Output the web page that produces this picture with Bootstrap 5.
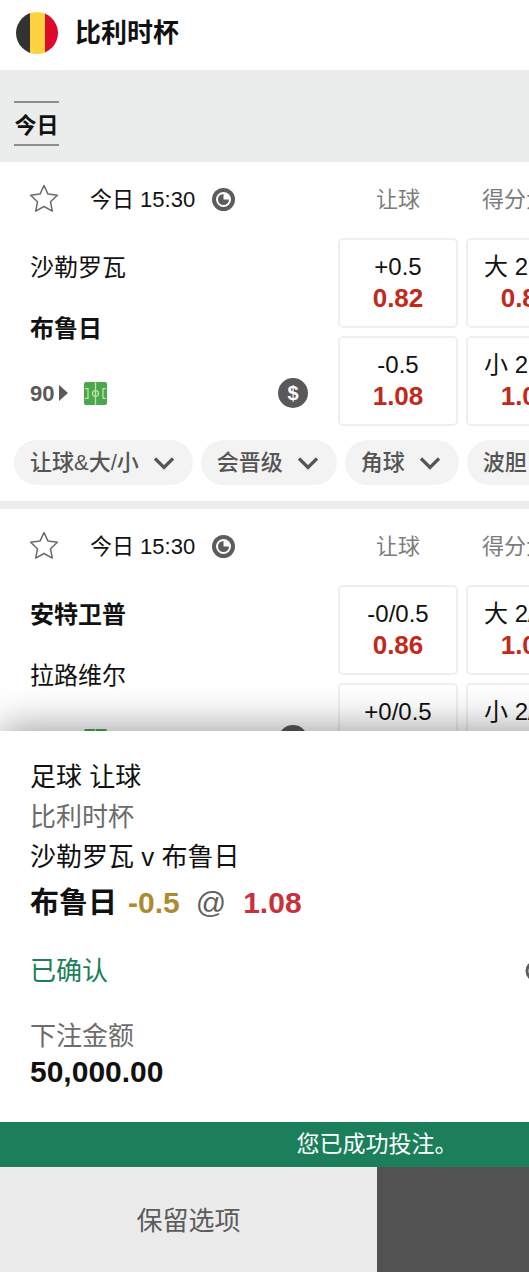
<!DOCTYPE html>
<html lang="zh-CN">
<head>
    <meta charset="UTF-8">
    <meta name="viewport" content="width=device-width, initial-scale=1.0">
    <title>比利时杯</title>
    <link rel="stylesheet" href="https://cdn.jsdelivr.net/npm/bootstrap@5.3.0/dist/css/bootstrap.min.css">
    <style>
        html, body { height: 100%; overflow: hidden; }
        body { font-family: "Liberation Sans", "Noto Sans CJK SC", sans-serif; color: #111; background: #fff; }
        .screen { width: 529px; height: 1280px; overflow: hidden; }
        svg { flex: none; }

        .top-bar { height: 70px; padding: 0 0 4px 16px; gap: 17px; }
        .top-title { font-size: 26px; font-weight: 700; line-height: 1; }
        .day-strip { height: 92px; background: #ebecec; padding: 31px 14px 0; }
        .day-tab { width: 45px; height: 45px; border-top: 2px solid #8e8e8e; border-bottom: 2px solid #8e8e8e; font-size: 22px; font-weight: 700; line-height: 45px; }

        .match-box { border-bottom: 8px solid #ececec; height: 347px; padding-bottom: 8px; }
        .match-box.last-box { border-bottom: 0; }
        .match-head { height: 76px; padding: 0 0 2px 28px; width: 800px; }
        .time-text { font-size: 22px; margin-left: 30px; width: 107px; flex: none; white-space: nowrap; }
        .clock-ico { margin-left: 15px; }
        .head-label { width: 120px; flex: none; text-align: center; font-size: 22px; color: #7c7c7c; white-space: nowrap; }
        .label-gap { margin-left: 8px; }
        .head-spacer { width: 103px; flex: none; }
        .match-body { height: 188px; width: 800px; }
        .team-col { width: 338px; flex: none; padding-left: 30px; }
        .team-line { height: 61px; font-size: 24px; line-height: 60px; }
        .live-line { height: 66px; padding-right: 30px; color: #5a5a5a; }
        .live-min { font-size: 22px; font-weight: 700; }
        .live-arrow { width: 0; height: 0; border-left: 9px solid #5a5a5a; border-top: 8px solid transparent; border-bottom: 8px solid transparent; margin-left: 5px; margin-right: 16px; }
        .cash-ico { width: 30px; height: 30px; background: #595959; color: #fff; font-size: 20px; font-weight: 700; line-height: 30px; text-align: center; }
        .odds-col { width: 120px; flex: none; margin-right: 8px; }
        .odds-box { height: 90px; margin-bottom: 8px; border: 2px solid #efefef; border-radius: 5px; text-align: center; padding-top: 12px; white-space: nowrap; }
        .odds-line { font-size: 24px; line-height: 30px; }
        .odds-price { font-size: 26px; line-height: 32px; font-weight: 700; color: #c3281c; }

        .chip-row { padding-left: 14px; margin-top: 14px; gap: 8px; width: 800px; }
        .chip-item { height: 45px; background: #f3f3f3; color: #555; font-size: 22px; font-weight: 500; padding: 0 18px 0 16px; gap: 14px; white-space: nowrap; }

        .bet-sheet { position: absolute; left: 0; top: 731px; width: 754px; height: 549px; background: #fff; box-shadow: 0 -4px 36px rgba(0, 0, 0, .38); }
        .bet-info { height: 391px; padding: 26px 30px 0; }
        .info-line { font-size: 26px; line-height: 40px; }
        .gray-text { color: #6c6c6c; }
        .pick-line { font-size: 30px; font-weight: 700; line-height: 52px; white-space: nowrap; }
        .pick-name { font-size: 29px; }
        .pick-hcp { color: #ad8a2e; margin-left: 11px; }
        .pick-at { color: #5f5f5f; font-weight: 400; margin: 0 17px 0 16px; }
        .pick-odds { color: #c8313a; }
        .status-line { margin-top: 22px; font-size: 26px; line-height: 40px; color: #1a7f5a; }
        .stake-label { margin-top: 25px; font-size: 26px; line-height: 40px; color: #6c6c6c; }
        .stake-value { font-size: 30px; font-weight: 700; line-height: 36px; margin-top: -2px; }
        .ok-bar { height: 45px; background: #1a7f5a; color: #fff; font-size: 23px; line-height: 44px; text-align: center; }
        .sheet-actions { height: 105px; }
        .keep-btn { width: 377px; background: #ebebeb; color: #5c5c5c; font-size: 26px; border: 0; border-radius: 0; padding-top: 8px; padding-bottom: 4px; }
        .dark-btn { width: 377px; background: #525252; border: 0; border-radius: 0; }
    </style>
</head>
<body>

<div class="screen position-relative">
    <!-- Header -->
    <div class="top-bar d-flex align-items-center">
        <svg width="42" height="42" viewBox="0 0 42 42">
            <defs><clipPath id="flagClip"><circle cx="21" cy="21" r="21"/></clipPath></defs>
            <g clip-path="url(#flagClip)">
                <rect x="0" y="0" width="14" height="42" fill="#333333"/>
                <rect x="14" y="0" width="15" height="42" fill="#fdd23e"/>
                <rect x="29" y="0" width="13" height="42" fill="#dd0a2b"/>
            </g>
        </svg>
        <div class="top-title">比利时杯</div>
    </div>

    <div class="day-strip">
        <div class="day-tab text-center">今日</div>
    </div>

    <!-- Match 1 -->
    <div class="match-box">
        <div class="match-head d-flex align-items-center">
            <svg width="32" height="32" viewBox="0 0 32 32"><path d="M16 2.5l4 8.6 9.4 1.2-6.9 6.5 1.8 9.3-8.3-4.6-8.3 4.6 1.8-9.3-6.9-6.5 9.4-1.2z" fill="none" stroke="#6a6a6a" stroke-width="1.5" stroke-linejoin="round"/></svg>
            <div class="time-text">今日 15:30</div>
            <svg class="clock-ico" width="23" height="23" viewBox="0 0 23 23"><circle cx="11.5" cy="11.5" r="11.5" fill="#5c5c5c"/><circle cx="11.5" cy="11.5" r="7.5" fill="#fff"/><path d="M11.5 6a5.5 5.5 0 1 0 5.5 5.5h-5.5z" fill="#5c5c5c"/></svg>
            <div class="head-spacer"></div>
            <div class="head-label">让球</div>
            <div class="head-label label-gap">得分大小</div>
        </div>
        <div class="match-body d-flex">
            <div class="team-col">
                <div class="team-line">沙勒罗瓦</div>
                <div class="team-line fw-bold">布鲁日</div>
                <div class="live-line d-flex align-items-center">
                    <span class="live-min">90</span>
                    <span class="live-arrow"></span>
                    <svg width="23" height="23" viewBox="0 0 23 24" preserveAspectRatio="none"><rect width="23" height="24" rx="2" fill="#4ca64c"/><g fill="none" stroke="#b9e6a8" stroke-width="1.3"><path d="M11.5 0v24"/><circle cx="11.5" cy="12" r="3"/><path d="M1 7h3v10H1M22 7h-3v10h3"/></g></svg>
                    <span class="cash-ico rounded-circle ms-auto">$</span>
                </div>
            </div>
            <div class="odds-col">
                <div class="odds-box"><div class="odds-line">+0.5</div><div class="odds-price">0.82</div></div>
                <div class="odds-box"><div class="odds-line">-0.5</div><div class="odds-price">1.08</div></div>
            </div>
            <div class="odds-col">
                <div class="odds-box"><div class="odds-line">大 2.5/3</div><div class="odds-price">0.84</div></div>
                <div class="odds-box"><div class="odds-line">小 2.5/3</div><div class="odds-price">1.06</div></div>
            </div>
        </div>
        <div class="chip-row d-flex">
            <div class="chip-item rounded-pill d-flex align-items-center">让球&amp;大/小
                <svg width="22" height="14" viewBox="0 0 22 14"><path d="M2 2.5l9 9 9-9" fill="none" stroke="#555" stroke-width="3.2"/></svg>
            </div>
            <div class="chip-item rounded-pill d-flex align-items-center">会晋级
                <svg width="22" height="14" viewBox="0 0 22 14"><path d="M2 2.5l9 9 9-9" fill="none" stroke="#555" stroke-width="3.2"/></svg>
            </div>
            <div class="chip-item rounded-pill d-flex align-items-center">角球
                <svg width="22" height="14" viewBox="0 0 22 14"><path d="M2 2.5l9 9 9-9" fill="none" stroke="#555" stroke-width="3.2"/></svg>
            </div>
            <div class="chip-item rounded-pill d-flex align-items-center">波胆
                <svg width="22" height="14" viewBox="0 0 22 14"><path d="M2 2.5l9 9 9-9" fill="none" stroke="#555" stroke-width="3.2"/></svg>
            </div>
        </div>
    </div>

    <!-- Match 2 -->
    <div class="match-box last-box">
        <div class="match-head d-flex align-items-center">
            <svg width="32" height="32" viewBox="0 0 32 32"><path d="M16 2.5l4 8.6 9.4 1.2-6.9 6.5 1.8 9.3-8.3-4.6-8.3 4.6 1.8-9.3-6.9-6.5 9.4-1.2z" fill="none" stroke="#6a6a6a" stroke-width="1.5" stroke-linejoin="round"/></svg>
            <div class="time-text">今日 15:30</div>
            <svg class="clock-ico" width="23" height="23" viewBox="0 0 23 23"><circle cx="11.5" cy="11.5" r="11.5" fill="#5c5c5c"/><circle cx="11.5" cy="11.5" r="7.5" fill="#fff"/><path d="M11.5 6a5.5 5.5 0 1 0 5.5 5.5h-5.5z" fill="#5c5c5c"/></svg>
            <div class="head-spacer"></div>
            <div class="head-label">让球</div>
            <div class="head-label label-gap">得分大小</div>
        </div>
        <div class="match-body d-flex">
            <div class="team-col">
                <div class="team-line fw-bold">安特卫普</div>
                <div class="team-line">拉路维尔</div>
                <div class="live-line d-flex align-items-center">
                    <span class="live-min">90</span>
                    <span class="live-arrow"></span>
                    <svg width="23" height="23" viewBox="0 0 23 24" preserveAspectRatio="none"><rect width="23" height="24" rx="2" fill="#4ca64c"/><g fill="none" stroke="#b9e6a8" stroke-width="1.3"><path d="M11.5 0v24"/><circle cx="11.5" cy="12" r="3"/><path d="M1 7h3v10H1M22 7h-3v10h3"/></g></svg>
                    <span class="cash-ico rounded-circle ms-auto">$</span>
                </div>
            </div>
            <div class="odds-col">
                <div class="odds-box"><div class="odds-line">-0/0.5</div><div class="odds-price">0.86</div></div>
                <div class="odds-box"><div class="odds-line">+0/0.5</div><div class="odds-price">1.04</div></div>
            </div>
            <div class="odds-col">
                <div class="odds-box"><div class="odds-line">大 2/2.5</div><div class="odds-price">1.00</div></div>
                <div class="odds-box"><div class="odds-line">小 2/2.5</div><div class="odds-price">0.90</div></div>
            </div>
        </div>
    </div>

    <!-- Bet confirmation sheet -->
    <div class="bet-sheet">
        <div class="bet-info">
            <div class="info-line">足球 让球</div>
            <div class="info-line gray-text">比利时杯</div>
            <div class="info-line">沙勒罗瓦 v 布鲁日</div>
            <div class="pick-line"><span class="pick-name">布鲁日</span><span class="pick-hcp">-0.5</span><span class="pick-at">@</span><span class="pick-odds">1.08</span></div>
            <div class="status-line d-flex justify-content-between align-items-center">
                <span>已确认</span>
                <svg width="199" height="22" viewBox="0 0 199 22"><circle cx="11" cy="11" r="9" fill="none" stroke="#5c5c5c" stroke-width="3"/></svg>
            </div>
            <div class="stake-label">下注金额</div>
            <div class="stake-value">50,000.00</div>
        </div>
        <div class="ok-bar">您已成功投注。</div>
        <div class="sheet-actions d-flex">
            <button type="button" class="btn keep-btn">保留选项</button>
            <button type="button" class="btn dark-btn" aria-label="完成"></button>
        </div>
    </div>
</div>

<script src="https://cdn.jsdelivr.net/npm/bootstrap@5.3.0/dist/js/bootstrap.bundle.min.js"></script>
</body>
</html>
